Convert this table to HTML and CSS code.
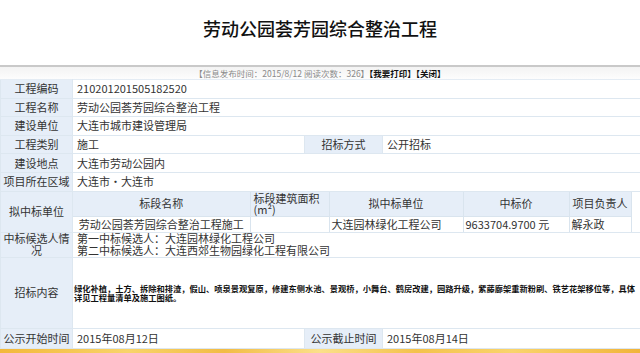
FILE: index.html
```html
<!DOCTYPE html>
<html lang="zh-CN">
<head>
<meta charset="utf-8">
<link rel="stylesheet" href="styles.css">
</head>
<body>
<div class="page">
  <h1 class="title">劳动公园荟芳园综合整治工程</h1>
  <div class="info">【信息发布时间：2015/8/12 阅读次数：326】<b>【我要打印】【关闭】</b></div>
  <table class="grid">
    <colgroup>
      <col class="c1"><col class="c2"><col class="c3"><col class="c4">
    </colgroup>
    <tr class="r">
      <td class="lab">工程编码</td><td class="val" colspan="3">210201201505182520</td>
    </tr>
    <tr class="r">
      <td class="lab">工程名称</td><td class="val" colspan="3">劳动公园荟芳园综合整治工程</td>
    </tr>
    <tr class="r">
      <td class="lab">建设单位</td><td class="val" colspan="3">大连市城市建设管理局</td>
    </tr>
    <tr class="r">
      <td class="lab">工程类别</td><td class="val">施工</td><td class="lab">招标方式</td><td class="val">公开招标</td>
    </tr>
    <tr class="r">
      <td class="lab">建设地点</td><td class="val" colspan="3">大连市劳动公园内</td>
    </tr>
    <tr class="r">
      <td class="lab">项目所在区域</td><td class="val" colspan="3">大连市・大连市</td>
    </tr>
    <tr>
      <td class="lab">拟中标单位</td>
      <td class="nest" colspan="3">
        <table class="sub">
          <colgroup>
            <col class="s1"><col class="s2"><col class="s3"><col class="s4"><col class="s5">
          </colgroup>
          <tr class="sh">
            <th>标段名称</th><th class="area">标段建筑面积<br>(m²)</th><th>拟中标单位</th><th>中标价</th><th class="left">项目负责人</th>
          </tr>
          <tr class="sd">
            <td class="ctr">劳动公园荟芳园综合整治工程施工</td><td></td><td>大连园林绿化工程公司</td><td>9633704.9700 元</td><td>解永政</td>
          </tr>
        </table>
      </td>
    </tr>
    <tr class="cand">
      <td class="lab">中标候选人情况</td>
      <td class="val" colspan="3">第一中标候选人：大连园林绿化工程公司<br>第二中标候选人：大连西郊生物园绿化工程有限公司</td>
    </tr>
    <tr class="content">
      <td class="lab">招标内容</td>
      <td class="val small" colspan="3">绿化补植，土方、拆除和排渣，假山、喷泉景观复原，修建东侧水池、景观桥，小舞台、鹤房改建，园路升级，紫藤廊架重新粉刷、铁艺花架移位等，具体<br>详见工程量清单及施工图纸。</td>
    </tr>
    <tr class="r last">
      <td class="lab">公示开始时间</td><td class="val">2015年08月12日</td><td class="lab">公示截止时间</td><td class="val">2015年08月14日</td>
    </tr>
  </table>
  <div class="stripe"></div>
</div>
</body>
</html>
```
FILE: styles.css
```css
html, body {
  margin: 0;
  padding: 0;
  background: #fff;
}
body {
  width: 640px;
  height: 353px;
  overflow: hidden;
  font-family: "Noto Sans CJK SC", "Liberation Sans", sans-serif;
  color: #333;
}
.page {
  width: 640px;
}
.title {
  margin: 0;
  height: 67px;
  box-sizing: border-box;
  padding-bottom: 9px;
  display: flex;
  align-items: center;
  justify-content: center;
  font-size: 18px;
  font-weight: 500;
  color: #111;
  border-bottom: 2px solid #c9c9c9;
}
.info {
  height: 12px;
  line-height: 12px;
  font-size: 8.5px;
  text-align: center;
  color: #8a8a8a;
  background: linear-gradient(#f3f3f3, #fdfdfd);
}
.info b {
  color: #111;
}
.grid {
  width: 640px;
  table-layout: fixed;
  border-collapse: collapse;
}
.c1 { width: 72px; }
.c2 { width: 232px; }
.c3 { width: 78px; }
.c4 { width: 258px; }
.grid > tbody > tr > td {
  border: 1px solid #dde7f0;
  font-size: 11px;
  line-height: 13px;
  padding: 0 0 0 4px;
  color: #333;
  white-space: nowrap;
}
.grid > tbody > tr > td.lab {
  background: #e6eef8;
  text-align: center;
  padding: 0;
  white-space: normal;
}
.grid > tbody > tr:first-child > td {
  border-top-color: #e4ecf4;
}
.r > td {
  height: 17.6px;
}
.grid td.nest {
  padding: 0;
  height: 40px;
}
.sub {
  width: 558px;
  table-layout: fixed;
  border-collapse: collapse;
}
.s1 { width: 177px; }
.s2 { width: 79px; }
.s3 { width: 134px; }
.s4 { width: 106px; }
.s5 { width: 62px; }
.sub th {
  background: #e6eef8;
  font-weight: normal;
  font-size: 11px;
  line-height: 11px;
  height: 24px;
  text-align: center;
  color: #333;
  border: 1px solid #d9e4ee;
  border-top: none;
  padding: 0;
}
.sub th.area {
  text-align: left;
  padding-left: 3px;
}
.sub th.left {
  text-align: left;
  padding-left: 3px;
}
.sub td {
  font-size: 11px;
  line-height: 13px;
  height: 15px;
  padding: 0 0 0 2px;
  border: 1px solid #d9e4ee;
  border-bottom: none;
  white-space: nowrap;
  color: #333;
}
.sub td.ctr {
  text-align: center;
  padding: 0;
}
.sub tr > :first-child {
  border-left: none;
}
.grid > tbody > tr.cand > td {
  height: 24px;
  line-height: 11.5px;
}
.content > td {
  height: 70px;
}
.grid > tbody > tr > td.small {
  font-size: 8.25px;
  line-height: 8.5px;
  font-weight: bold;
  color: #111;
  padding-left: 1px;
  letter-spacing: 0;
}
.grid > tbody > tr.last > td {
  height: 19px;
}
.stripe {
  height: 6px;
  background: linear-gradient(90deg, #f3b83a 0%, #f8d46a 20%, #f2bc45 35%, #fbe08a 50%, #f4c24c 65%, #f9d46c 80%, #f1b43a 100%);
}
```
